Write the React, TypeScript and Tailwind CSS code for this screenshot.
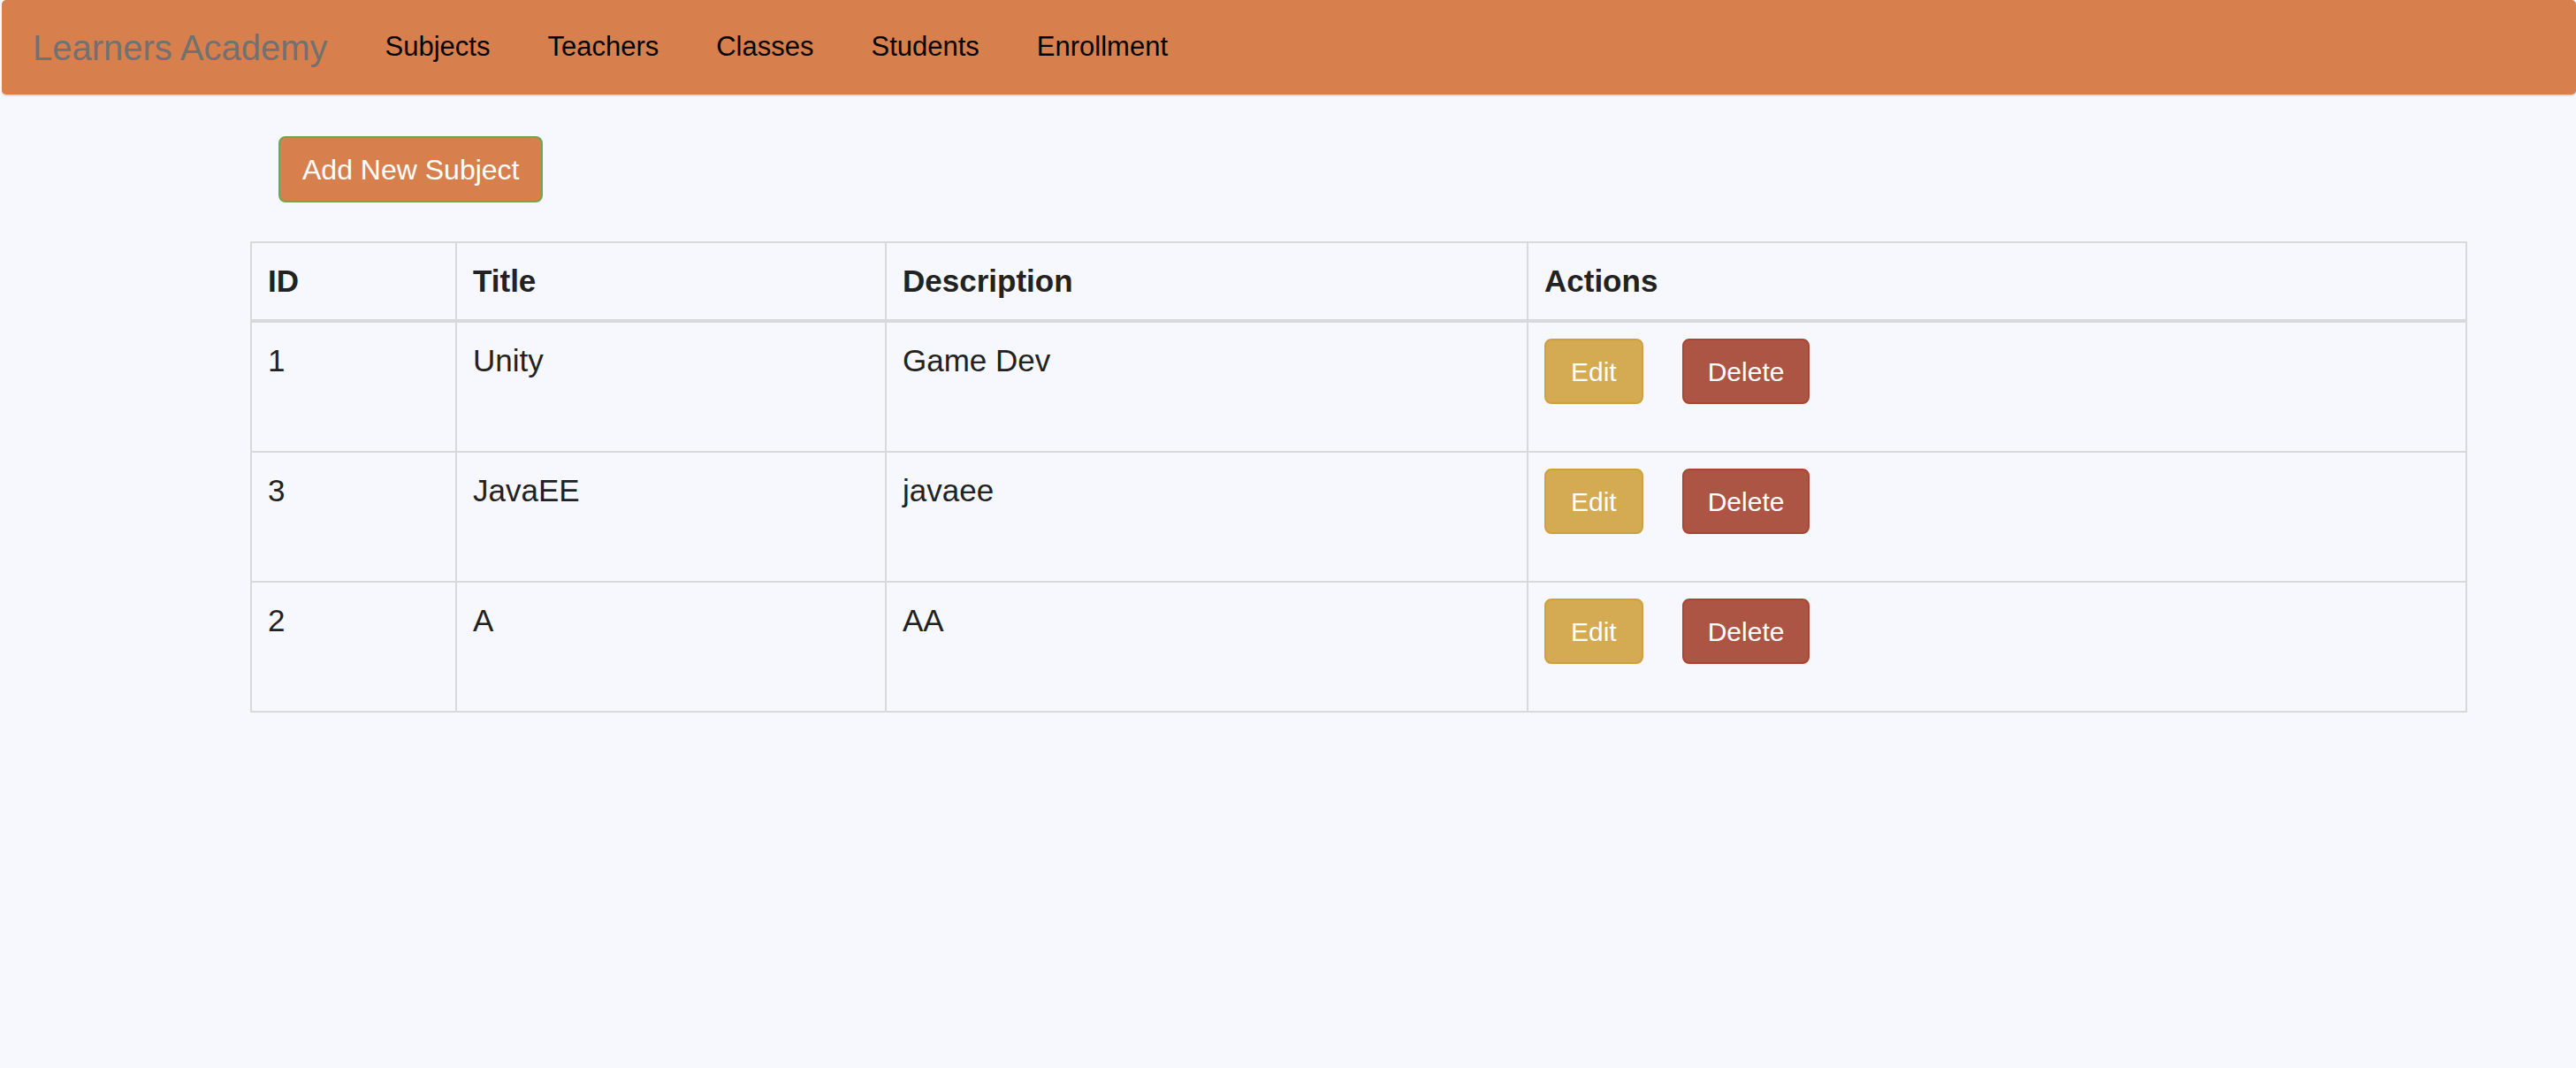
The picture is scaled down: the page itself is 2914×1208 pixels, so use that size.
import React from 'react';

const subjects = [
  { id: 1, title: 'Unity', description: 'Game Dev' },
  { id: 3, title: 'JavaEE', description: 'javaee' },
  { id: 2, title: 'A', description: 'AA' },
];

const navLinks = ['Subjects', 'Teachers', 'Classes', 'Students', 'Enrollment'];

export default function App() {
  return (
    <div className="min-h-screen bg-[#f7f8fd] font-['Liberation_Sans',Arial,sans-serif] text-[#222]">
      {/* Navbar */}
      <nav className="ml-[2px] h-[107px] rounded-[5px] bg-[#d7804e] shadow-[0_2px_0_#dfdfe3] flex items-center pl-[35px]">
        <a href="#" className="text-[40px] leading-[1.5] text-[#717171] mr-[65px]">
          Learners Academy
        </a>
        <div className="flex items-center gap-[65px]">
          {navLinks.map((l) => (
            <a key={l} href="#" className="text-[31px] leading-[1.5] text-black">
              {l}
            </a>
          ))}
        </div>
      </nav>

      {/* Add button */}
      <div className="mt-[47px] ml-[315px]">
        <button className="h-[75px] px-[25px] rounded-[8px] border-2 border-[#6ba84f] bg-[#d7804e] text-white text-[32px] flex items-center">
          Add New Subject
        </button>
      </div>

      {/* Subjects table */}
      <table className="mt-[44px] ml-[283px] w-[2506px] table-fixed border-collapse border-2 border-[#d9d9dc] text-[35px]">
        <colgroup>
          <col className="w-[232px]" />
          <col className="w-[486px]" />
          <col className="w-[726px]" />
          <col className="w-[1062px]" />
        </colgroup>
        <thead>
          <tr>
            {['ID', 'Title', 'Description', 'Actions'].map((h) => (
              <th
                key={h}
                className="border-2 border-b-4 border-[#d9d9dc] px-[18px] py-[18px] leading-[50px] text-left font-bold align-top"
              >
                {h}
              </th>
            ))}
          </tr>
        </thead>
        <tbody>
          {subjects.map((s) => (
            <tr key={s.id}>
              <td className="border-2 border-[#d9d9dc] px-[18px] py-[18px] leading-[50px] align-top">{s.id}</td>
              <td className="border-2 border-[#d9d9dc] px-[18px] py-[18px] leading-[50px] align-top">{s.title}</td>
              <td className="border-2 border-[#d9d9dc] px-[18px] py-[18px] leading-[50px] align-top">{s.description}</td>
              <td className="border-2 border-[#d9d9dc] px-[18px] py-[18px] align-top">
                <div className="flex gap-[44px] mb-[35px]">
                  <button className="h-[74px] px-[28px] rounded-[8px] border-2 border-[#cfa03f] bg-[#d4aa53] text-white text-[30px] flex items-center">
                    Edit
                  </button>
                  <button className="h-[74px] px-[27px] rounded-[8px] border-2 border-[#a84533] bg-[#ad5545] text-white text-[30px] flex items-center">
                    Delete
                  </button>
                </div>
              </td>
            </tr>
          ))}
        </tbody>
      </table>
    </div>
  );
}
